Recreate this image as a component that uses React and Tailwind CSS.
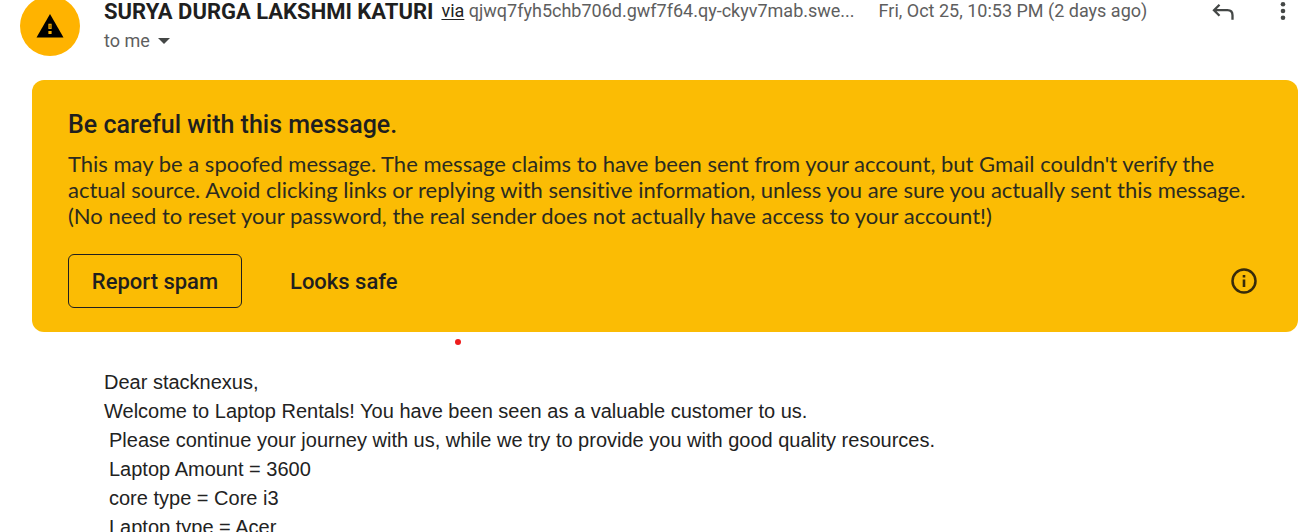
const bodyLines = [
  { text: 'Dear stacknexus,' },
  { text: 'Welcome to Laptop Rentals! You have been seen as a valuable customer to us.' },
  { text: 'Please continue your journey with us, while we try to provide you with good quality resources.', indent: true },
  { text: 'Laptop Amount = 3600', indent: true },
  { text: 'core type = Core i3', indent: true },
  { text: 'Laptop type = Acer', indent: true },
];

function Header() {
  return (
    <header className="flex items-start pl-5 pr-[17px]">
      <div className="-mt-1 flex size-[60px] shrink-0 items-center justify-center rounded-full bg-[#ffb300]">
        <svg viewBox="0 0 28 24" className="h-6 w-7" aria-hidden="true">
          <path d="M14 0 27.5 23.5H.5Z" fill="#000" />
          <path d="M12.4 9.7h3.2v5.4h-3.2zM12.4 17h3.2v3h-3.2z" fill="#ffb300" />
          <path d="M13.6 10.8h.9v3.4h-.9z" fill="#5a4000" />
        </svg>
      </div>
      <div className="ml-6 min-w-0 flex-1">
        <div className="flex h-[22px] items-center whitespace-nowrap">
          <h1 className="text-[22px] font-bold text-[#1f1f1f]">SURYA DURGA LAKSHMI KATURI</h1>
          <p className="ml-2 text-lg text-[#5e5e5e]">
            <a href="#via" className="text-[#222] underline underline-offset-2">via</a> qjwq7fyh5chb706d.gwf7f64.qy-ckyv7mab.swe...
          </p>
          <time className="ml-6 text-lg text-[#5e5e5e]">Fri, Oct 25, 10:53 PM (2 days ago)</time>
        </div>
        <button type="button" className="mt-2 flex h-[22px] items-center gap-2 text-lg text-[#5e5e5e]">
          to me
          <svg viewBox="0 0 12 6" className="h-[6px] w-3" aria-hidden="true"><path d="M0 0h12L6 6z" fill="#444746" /></svg>
        </button>
      </div>
      <div className="flex h-[22px] items-center gap-[46px]">
        <button type="button" aria-label="Reply">
          <svg viewBox="0 0 24 18" className="h-[18px] w-6" fill="none" stroke="#444746" strokeWidth="2.3" aria-hidden="true"><path d="M9.5 2.7 4 8.2l5.5 5.5M4 8.2h13.5q5 0 5 5v4.6" /></svg>
        </button>
        <button type="button" aria-label="More">
          <svg viewBox="0 0 6 20" className="h-5 w-[6px]" fill="#444746" aria-hidden="true"><circle cx="3" cy="3.3" r="2.3" /><circle cx="3" cy="10" r="2.3" /><circle cx="3" cy="16.7" r="2.3" /></svg>
        </button>
      </div>
    </header>
  );
}

function SpoofWarning() {
  return (
    <section className="ml-8 mr-[5px] mt-6 rounded-xl bg-[#fbbc04] px-9 pt-[30px] pb-6 text-[#1f1f1f]">
      <h2 className="text-[25px] leading-[30px] font-medium">Be careful with this message.</h2>
      <p className="mt-[11px] mb-[25px] font-[Lato,sans-serif] text-[22px] leading-[26px] text-[#2b2b20] [font-variant-ligatures:none]">
        <span className="block">This may be a spoofed message. The message claims to have been sent from your account, but Gmail couldn't verify the</span>
        <span className="block">actual source. Avoid clicking links or replying with sensitive information, unless you are sure you actually sent this message.</span>
        <span className="block">(No need to reset your password, the real sender does not actually have access to your account!)</span>
      </p>
      <div className="flex items-center">
        <button type="button" className="h-[54px] w-[174px] rounded-md border border-[#1f1f1f] text-[22px] font-medium">Report spam</button>
        <button type="button" className="ml-6 h-[54px] px-6 text-[22px] font-medium">Looks safe</button>
        <button type="button" aria-label="More information" className="mr-1 ml-auto">
          <svg viewBox="0 0 28 28" className="size-7" fill="#372b0b" aria-hidden="true">
            <circle cx="14" cy="14" r="11.5" fill="none" stroke="#372b0b" strokeWidth="2.5" />
            <path d="M12.7 8h2.6v2.4h-2.6zM12.7 12.6h2.6v7.4h-2.6z" />
          </svg>
        </button>
      </div>
    </section>
  );
}

export default function App() {
  return (
    <main className="h-screen overflow-hidden bg-white font-[Roboto,sans-serif]">
      <Header />
      <SpoofWarning />
      <div className="ml-[455px] mt-[7px] size-[6px] rounded-full bg-[#ee1c1c]" />
      <article className="ml-[104px] mt-[23px] font-['Liberation_Sans',sans-serif] text-xl leading-[29px] text-[#222]">
        {bodyLines.map((l) => <p key={l.text} className={l.indent ? 'pl-[5px]' : ''}>{l.text}</p>)}
      </article>
    </main>
  );
}
